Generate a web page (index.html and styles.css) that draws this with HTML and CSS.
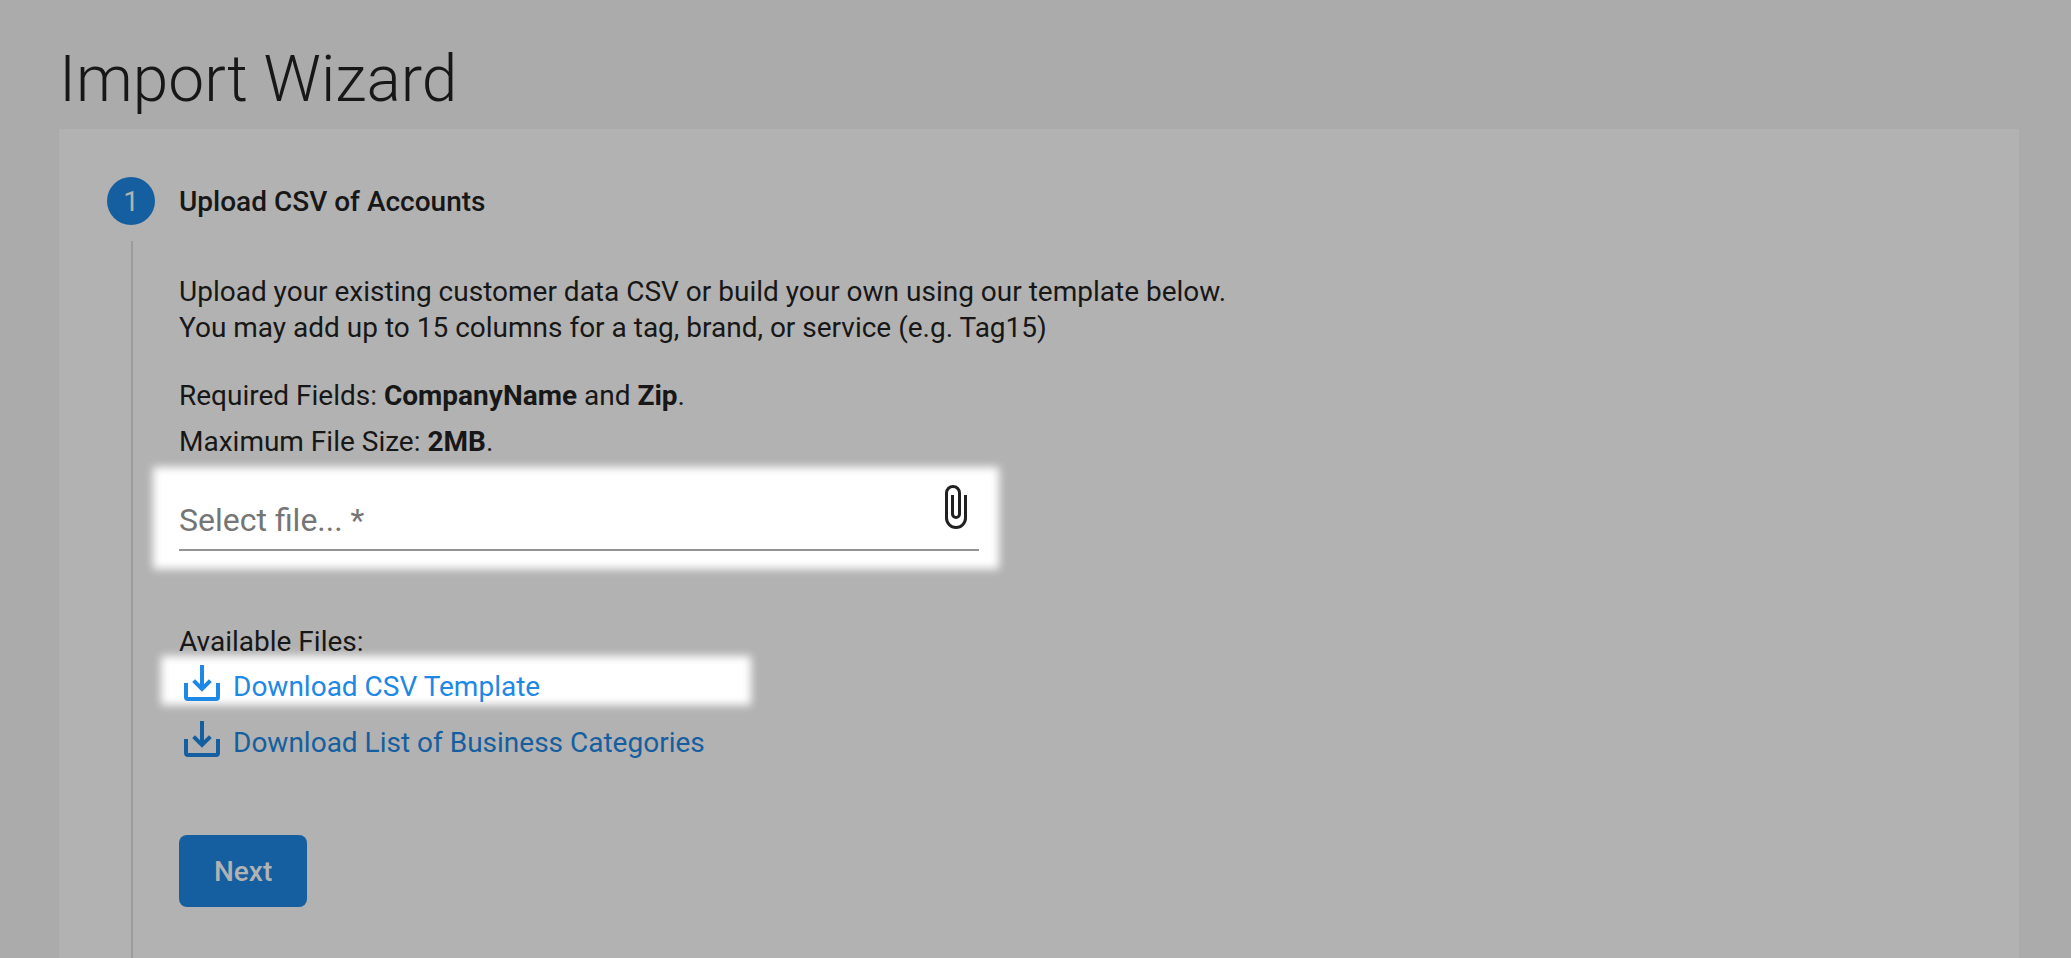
FILE: index.html
```html
<!DOCTYPE html>
<html lang="en">
<head>
<meta charset="utf-8">
<title>Import Wizard</title>
<link rel="stylesheet" href="styles.css">
</head>
<body>
<main class="page">
  <h1 class="title">Import Wizard</h1>
  <section class="card">
    <span class="step-number">1</span>
    <h2 class="step-title">Upload CSV of Accounts</h2>
    <div class="rail"></div>
    <form class="content">
      <p class="text">Upload your existing customer data CSV or build your own using our template below.<br>You may add up to 15 columns for a tag, brand, or service (e.g. Tag15)</p>
      <div class="facts">
        <p class="text">Required Fields: <strong>CompanyName</strong> and <strong>Zip</strong>.</p>
        <p class="text">Maximum File Size: <strong>2MB</strong>.</p>
      </div>
      <div class="field spotlight">
        <input class="field-input" type="text" placeholder="Select file... *" aria-label="Select file" readonly>
        <button class="attach" type="button" aria-label="Attach file">
          <svg class="clip" viewBox="0 0 22 44" aria-hidden="true"><path d="M20.5 10V33a9.5 9.5 0 0 1-19 0V8a6.500 6.500 0 0 1 13 0V29a3.500 3.500 0 0 1-7 0V10"/></svg>
        </button>
      </div>
      <p class="text">Available Files:</p>
      <ul class="files">
        <li class="file spotlight file-active">
          <a class="link" href="#template">
            <svg class="download" viewBox="0 0 36 36" aria-hidden="true"><path d="M18 0V23M9.600 15.700 18 24 26.400 15.700"/><path d="M2 18V32a2 2 0 0 0 2 2H32a2 2 0 0 0 2-2V18"/></svg>
            Download CSV Template</a>
        </li>
        <li class="file">
          <a class="link" href="#categories">
            <svg class="download" viewBox="0 0 36 36" aria-hidden="true"><path d="M18 0V23M9.600 15.700 18 24 26.400 15.700"/><path d="M2 18V32a2 2 0 0 0 2 2H32a2 2 0 0 0 2-2V18"/></svg>
            Download List of Business Categories</a>
        </li>
      </ul>
      <button class="next" type="button">Next</button>
    </form>
  </section>
</main>
</body>
</html>
```
FILE: styles.css
```css
* {
  box-sizing: border-box;
}

body {
  margin: 0;
  background: #ababab;
  color: #171717;
  font-family: Roboto, "Liberation Sans", sans-serif;
  font-size: 28px;
  line-height: 36px;
}

.page {
  display: flex;
  flex-direction: column;
  min-height: 100vh;
  padding: 42px 52px 0 59px;
}

.title {
  margin: 0 0 11px;
  font-size: 64px;
  font-weight: 300;
  line-height: 76px;
}

.card {
  position: relative;
  z-index: 0;
  flex: 1;
  display: grid;
  grid-template-columns: 48px 1fr;
  grid-template-rows: auto 1fr;
  gap: 16px 24px;
  padding: 48px 48px 0;
  background: #b2b2b2;
}

.step-number {
  height: 48px;
  border-radius: 50%;
  background: #155fa0;
  color: #b2b2b2;
  line-height: 50px;
  text-align: center;
}

.step-title {
  margin: 0;
  font-size: 28px;
  font-weight: 500;
  line-height: 50px;
  height: 48px;
}

.rail {
  width: 2px;
  margin-left: 24px;
  background: #9c9c9c;
}

.content {
  padding: 33px 0 48px;
}

.text {
  margin: 0;
}

.facts {
  display: grid;
  gap: 10px;
  margin: 32px 0 25px;
}

.spotlight {
  position: relative;
}

.spotlight::before {
  content: "";
  position: absolute;
  z-index: -1;
  background: #fff;
  filter: blur(4px);
}

.field {
  display: flex;
  align-items: flex-start;
  width: 100%;
  max-width: 800px;
  margin-bottom: 73px;
  padding-right: 12px;
  border-bottom: 2px solid #949494;
}

.field::before {
  inset: -18px -20px -20px -26px;
}

.field-input {
  flex: 1;
  min-width: 0;
  height: 64px;
  padding: 15px 0 9px;
  border: 0;
  background: none;
  color: #171717;
  font: 32px/40px Roboto, sans-serif;
}

.field-input::placeholder {
  color: #757575;
  opacity: 1;
}

.attach {
  display: flex;
  padding: 0;
  border: 0;
  background: none;
  color: #212121;
}

.clip {
  width: 22px;
  height: 44px;
  fill: none;
  stroke: currentColor;
  stroke-width: 3;
}

.files {
  display: grid;
  gap: 12px;
  margin: 5px 0 70px;
  padding: 0;
  list-style: none;
}

.file {
  max-width: 572px;
  padding-left: 5px;
}

.file-active::before {
  inset: -9px 0 4px -18px;
}

.link {
  display: flex;
  gap: 13px;
  color: #155fa0;
  line-height: 44px;
  text-decoration: none;
}

.file-active .link {
  color: #1e88e5;
}

.download {
  flex: none;
  width: 36px;
  height: 36px;
  fill: none;
  stroke: currentColor;
  stroke-width: 4;
}

.next {
  display: block;
  height: 72px;
  padding: 2px 35px 0;
  border: 0;
  border-radius: 8px;
  background: #155fa0;
  color: #b2b2b2;
  font: 500 28px/36px Roboto, sans-serif;
}
```
